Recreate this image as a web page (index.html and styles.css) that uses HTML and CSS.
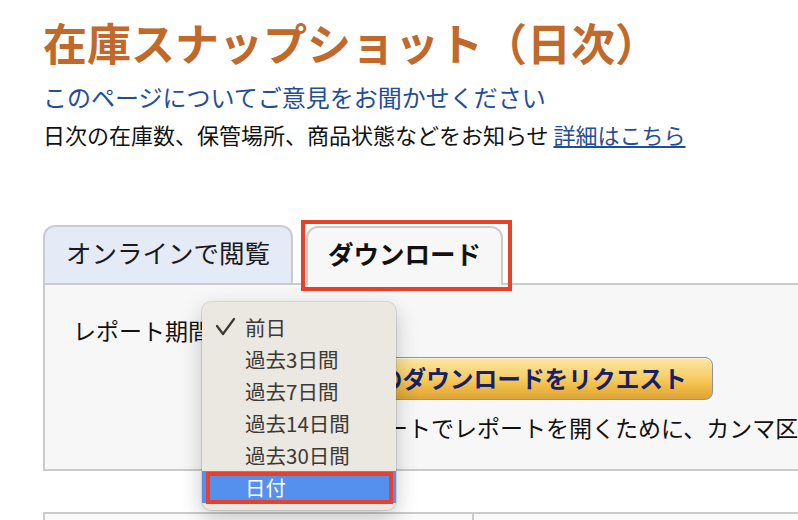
FILE: index.html
```html
<!DOCTYPE html>
<html lang="ja">

<head>
    <meta charset="UTF-8">
    <meta name="viewport" content="width=device-width, initial-scale=1.0">
    <title>在庫スナップショット（日次）</title>
    <link rel="stylesheet" href="styles.css">
</head>

<body>
    <div class="page">
        <h1 class="title">在庫スナップショット（日次）</h1>
        <a class="feedback" href="#">このページについてご意見をお聞かせください</a>
        <p class="summary">日次の在庫数、保管場所、商品状態などをお知らせ <a href="#">詳細はこちら</a></p>

        <div class="tabs">
            <div class="tab">オンラインで閲覧</div>
            <div class="tab active">ダウンロード</div>
        </div>

        <div class="panel">
            <div class="row">
                <span class="label">レポート期間</span>
                <div class="select">前日</div>
            </div>
            <div class="actions">
                <button class="request">レポートのダウンロードをリクエスト</button>
                <p class="note">スプレッドシートでレポートを開くために、カンマ区切り形式を選択してください</p>
            </div>

            <!-- open popup of the period select -->
            <ul class="menu">
                <li class="checked">
                    <svg class="check" width="22" height="20" viewBox="0 0 22 20">
                        <polyline points="3,9 9,17 20,2" fill="none" stroke="#3b3934" stroke-width="2.2" stroke-linecap="round" stroke-linejoin="round" />
                    </svg>
                    前日
                </li>
                <li>過去3日間</li>
                <li>過去7日間</li>
                <li>過去14日間</li>
                <li>過去30日間</li>
                <li class="hover">日付</li>
            </ul>
        </div>

        <div class="table">
            <div class="cell"></div>
            <div class="cell"></div>
        </div>
    </div>
</body>

</html>
```

FILE: styles.css
```css
html,
body {
    margin: 0;
    overflow: hidden;
}

body {
    font-family: "Noto Sans CJK JP", "Noto Sans", sans-serif;
    color: #111;
    background-color: #fff;
}

.page {
    width: 860px;
    padding: 16px 0 0 43px;
}

.title {
    margin: 0;
    font-size: 44px;
    line-height: 52px;
    font-weight: bold;
    color: #c0692a;
}

.feedback {
    display: block;
    margin-top: 13px;
    font-size: 24px;
    line-height: 32px;
    color: #1f4e9a;
    text-decoration: none;
}

.summary {
    margin: 6px 0 0;
    font-size: 22px;
    line-height: 30px;
}

.summary a {
    color: #1f4e9a;
    text-decoration: underline;
}

/* tabs */
.tabs {
    display: flex;
    align-items: flex-end;
    gap: 13px;
    margin-top: 76px;
}

.tab {
    box-sizing: border-box;
    height: 58px;
    padding: 0 21px;
    border: 2px solid #cbcbcb;
    border-bottom: 0;
    border-radius: 12px 12px 0 0;
    background-color: #e4ebf7;
    font-size: 25.5px;
    line-height: 50px;
    color: #1a1a1a;
}

.tab.active {
    position: relative;
    z-index: 2;
    height: 59px;
    margin-bottom: -2px;
    padding: 0 20px;
    background-color: #f7f7f7;
    font-weight: bold;
    color: #111;
}

.tab.active::after {
    content: "";
    position: absolute;
    left: -7px;
    top: -8px;
    right: -11px;
    bottom: -6px;
    border: 4px solid #e8412b;
}

/* download panel */
.panel {
    position: relative;
    padding: 28px 0 26px 28px;
    border: 2px solid #cbcbcb;
    background-color: #f7f7f7;
    font-size: 23px;
}

.row {
    display: flex;
    align-items: center;
    line-height: 34px;
}

.select {
    box-sizing: border-box;
    width: 160px;
    height: 30px;
    margin-left: 8px;
    padding-left: 10px;
    border: 1px solid #aaa;
    border-radius: 5px;
    background-color: #fff;
    font-size: 18px;
    line-height: 28px;
}

.actions {
    margin-left: 163px;
}

.request {
    height: 43px;
    margin: 10px 0 0 23px;
    padding: 0 25px 0 24px;
    border: 1px solid #8793b2;
    border-radius: 8px;
    background: linear-gradient(#fde7a6 0%, #f8cf6a 45%, #f0bb45 70%, #dca338 100%);
    box-shadow: inset 0 1px 0 rgba(255, 255, 255, 0.6);
    font-family: inherit;
    font-size: 23.7px;
    font-weight: bold;
    line-height: 41px;
    color: #14206a;
}

.note {
    margin: 11px 0 0;
    padding-left: 11px;
    line-height: 32px;
    white-space: nowrap;
}

/* popup menu */
.menu {
    position: absolute;
    left: 157px;
    top: 17px;
    width: 194px;
    margin: 0;
    padding: 9px 0 7px;
    list-style: none;
    background-color: #ebe8e1;
    border-radius: 9px;
    box-shadow: 0 0 0 1px rgba(0, 0, 0, 0.1), 0 8px 22px rgba(0, 0, 0, 0.22);
    z-index: 3;
}

.menu li {
    position: relative;
    height: 32px;
    padding-left: 43px;
    font-size: 20.5px;
    line-height: 32px;
    color: #3b3934;
}

.menu .check {
    position: absolute;
    left: 12px;
    top: 6px;
}

.menu li.hover {
    background-color: #5690ee;
    color: #fff;
}

.menu li.hover::after {
    content: "";
    position: absolute;
    left: 4px;
    top: 1px;
    right: 3px;
    bottom: -1px;
    border: 4px solid #e8412b;
}

/* table below */
.table {
    display: grid;
    grid-template-columns: 427px 1fr;
    height: 60px;
    margin-top: 41px;
    border: 2px solid #cbcbcb;
    background-color: #fafafa;
}

.table .cell+.cell {
    border-left: 2px solid #cbcbcb;
}
```
